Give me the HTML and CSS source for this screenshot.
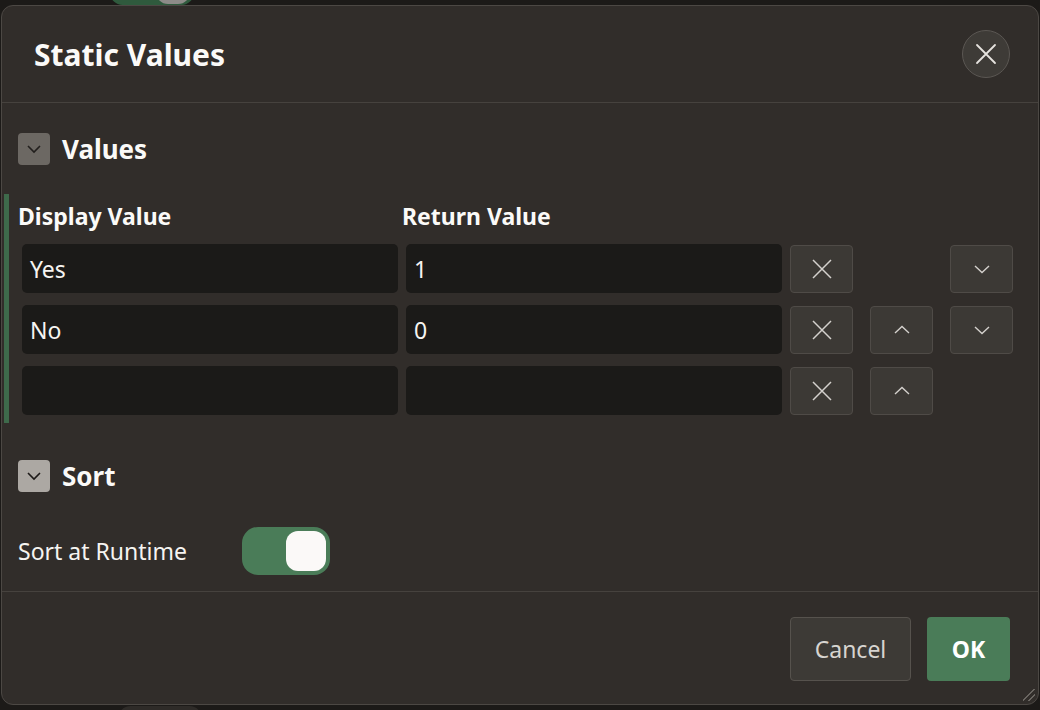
FILE: index.html
```html
<!DOCTYPE html>
<html lang="en">
<head>
<meta charset="utf-8">
<title>Static Values</title>
<link rel="stylesheet" href="styles.css">
</head>
<body>
<span class="bg-switch"><span class="bg-knob"></span></span>
<span class="bg-switch bg-switch--bottom"></span>
<div class="dialog">
  <header class="dialog-header">
    <h1 class="dialog-title">Static Values</h1>
    <button class="close-btn" aria-label="Close">
      <svg width="22" height="22" viewBox="0 0 22 22"><path d="M2 2L20 20M20 2L2 20" stroke="#e6e3df" stroke-width="1.8" fill="none" stroke-linecap="round"/></svg>
    </button>
  </header>
  <main class="dialog-body">
    <div class="section-head">
      <span class="collapse collapse--dim"><svg width="16" height="10" viewBox="0 0 16 10"><path d="M2 2L8 8L14 2" stroke="#221f1d" stroke-width="1.6" fill="none"/></svg></span>
      <h2 class="section-title">Values</h2>
    </div>
    <div class="values-table">
      <div class="table-head">
        <div class="th">Display Value</div>
        <div class="th">Return Value</div>
      </div>
      <div class="vrow">
        <div class="field">Yes</div>
        <div class="field">1</div>
        <button class="icon-btn" aria-label="Remove"><svg width="22" height="22" viewBox="0 0 22 22"><path d="M2 2L20 20M20 2L2 20" stroke="#d4d1cd" stroke-width="1.5" fill="none"/></svg></button>
        <span class="icon-spacer"></span>
        <button class="icon-btn icon-btn--gap" aria-label="Move down"><svg width="18" height="10" viewBox="0 0 18 10"><path d="M2 2L9 8.5L16 2" stroke="#d4d1cd" stroke-width="1.4" fill="none"/></svg></button>
      </div>
      <div class="vrow">
        <div class="field">No</div>
        <div class="field">0</div>
        <button class="icon-btn" aria-label="Remove"><svg width="22" height="22" viewBox="0 0 22 22"><path d="M2 2L20 20M20 2L2 20" stroke="#d4d1cd" stroke-width="1.5" fill="none"/></svg></button>
        <button class="icon-btn icon-btn--gap" aria-label="Move up"><svg width="18" height="10" viewBox="0 0 18 10"><path d="M2 8L9 1.5L16 8" stroke="#d4d1cd" stroke-width="1.4" fill="none"/></svg></button>
        <button class="icon-btn icon-btn--gap" aria-label="Move down"><svg width="18" height="10" viewBox="0 0 18 10"><path d="M2 2L9 8.5L16 2" stroke="#d4d1cd" stroke-width="1.4" fill="none"/></svg></button>
      </div>
      <div class="vrow">
        <div class="field"></div>
        <div class="field"></div>
        <button class="icon-btn" aria-label="Remove"><svg width="22" height="22" viewBox="0 0 22 22"><path d="M2 2L20 20M20 2L2 20" stroke="#d4d1cd" stroke-width="1.5" fill="none"/></svg></button>
        <button class="icon-btn icon-btn--gap" aria-label="Move up"><svg width="18" height="10" viewBox="0 0 18 10"><path d="M2 8L9 1.5L16 8" stroke="#d4d1cd" stroke-width="1.4" fill="none"/></svg></button>
      </div>
    </div>
    <div class="section-head section-head--sort">
      <span class="collapse collapse--light"><svg width="16" height="10" viewBox="0 0 16 10"><path d="M2 2L8 8L14 2" stroke="#1d1a18" stroke-width="1.6" fill="none"/></svg></span>
      <h2 class="section-title">Sort</h2>
    </div>
    <div class="sort-row">
      <span class="sort-label">Sort at Runtime</span>
      <span class="switch"><span class="knob"></span></span>
    </div>
  </main>
  <footer class="dialog-footer">
    <button class="btn btn--cancel">Cancel</button>
    <button class="btn btn--ok">OK</button>
  </footer>
  <span class="resize-handle"></span>
</div>
</body>
</html>
```

FILE: styles.css
```css
* { box-sizing: border-box; }

html, body {
  margin: 0;
  padding: 0;
  background: #1c1a18;
  width: 1040px;
  height: 710px;
  overflow: hidden;
  font-family: "Noto Sans", "Open Sans", sans-serif;
  color: #f6f4f1;
}

body {
  position: relative;
  padding: 5px 0 0 1px;
}

.bg-switch {
  position: absolute;
  left: 110px;
  top: -20px;
  width: 84px;
  height: 25px;
  border-radius: 14px;
  background: #2f5a3d;
}
.bg-knob {
  position: absolute;
  right: 4px;
  top: 0;
  width: 34px;
  height: 24px;
  border-radius: 12px;
  background: #8d8b88;
}
.bg-switch--bottom {
  top: 706px;
  left: 118px;
  background: #2e2b28;
}

.dialog {
  position: relative;
  width: 1038px;
  height: 700px;
  background: #312d2a;
  border: 1px solid #4c4844;
  border-radius: 12px;
  display: flex;
  flex-direction: column;
}

.dialog-header {
  height: 97px;
  flex: none;
  display: flex;
  align-items: center;
  justify-content: space-between;
  padding: 0 28px 0 32px;
  border-bottom: 1px solid #46423e;
}

.dialog-title {
  margin: 0;
  font-size: 30px;
  font-weight: 700;
  color: #fbfaf8;
}

.close-btn {
  width: 48px;
  height: 48px;
  border-radius: 50%;
  background: #3e3b37;
  border: 1.5px solid #5b5753;
  display: flex;
  align-items: center;
  justify-content: center;
  padding: 0;
}

.dialog-body {
  flex: 1;
  padding: 30px 0 0 0;
}

.section-head {
  display: flex;
  align-items: center;
  gap: 12px;
  height: 32px;
  padding-left: 16px;
}
.section-head--sort { margin-top: 37px; }

.collapse {
  width: 32px;
  height: 32px;
  border-radius: 4px;
  display: flex;
  align-items: center;
  justify-content: center;
}
.collapse--dim { background: #6c6863; }
.collapse--light { background: #aca8a3; }

.section-title {
  margin: 0;
  font-size: 26px;
  font-weight: 700;
  color: #fbfaf8;
}

.values-table {
  margin: 29px 0 0 2px;
  border-left: 5px solid #3e6a4b;
  padding: 7px 0 8px 9px;
}

.table-head {
  display: flex;
  height: 30px;
  margin-bottom: 13px;
  align-items: center;
}
.th {
  width: 384px;
  font-size: 23px;
  font-weight: 700;
  color: #fbfaf8;
}

.vrow {
  display: flex;
  align-items: center;
  padding-left: 4px;
  height: 49px;
}
.vrow + .vrow { margin-top: 12px; }

.field {
  width: 376px;
  height: 49px;
  margin-right: 8px;
  background: #1b1a18;
  border-radius: 5px;
  font-size: 23px;
  color: #f6f4f1;
  display: flex;
  align-items: center;
  padding-left: 8px;
}

.icon-btn {
  width: 63px;
  height: 48px;
  background: #3c3935;
  border: 1px solid #4f4b47;
  border-radius: 4px;
  display: flex;
  align-items: center;
  justify-content: center;
  padding: 0;
}
.icon-btn--gap { margin-left: 17px; }
.icon-spacer { width: 63px; margin-left: 17px; }

.sort-row {
  display: flex;
  align-items: center;
  margin-top: 35px;
  padding-left: 16px;
  height: 48px;
}
.sort-label {
  width: 224px;
  font-size: 23px;
  color: #f6f4f1;
}
.switch {
  position: relative;
  width: 88px;
  height: 48px;
  border-radius: 16px;
  background: #4a7c58;
  display: flex;
  justify-content: flex-end;
  align-items: center;
  padding-right: 4px;
}
.knob {
  width: 40px;
  height: 40px;
  border-radius: 12px;
  background: #fbf9f8;
}

.dialog-footer {
  flex: none;
  height: 113px;
  border-top: 1px solid #46423e;
  display: flex;
  justify-content: flex-end;
  align-items: flex-start;
  gap: 16px;
  padding: 25px 28px 0 0;
}

.btn {
  height: 64px;
  border-radius: 4px;
  font-family: "Noto Sans", "Open Sans", sans-serif;
  font-size: 23px;
  padding: 0;
}
.btn--cancel {
  width: 121px;
  background: #3d3a36;
  border: 1.5px solid #56524d;
  color: #d7d4d0;
}
.btn--ok {
  width: 83px;
  background: #4a7c58;
  border: none;
  color: #ffffff;
  font-weight: 700;
}

.resize-handle {
  position: absolute;
  right: 3px;
  bottom: 3px;
  width: 12px;
  height: 12px;
  background: linear-gradient(135deg, transparent 45%, #6a6661 45%, #6a6661 52%, transparent 52%, transparent 70%, #6a6661 70%, #6a6661 77%, transparent 77%);
}
```
